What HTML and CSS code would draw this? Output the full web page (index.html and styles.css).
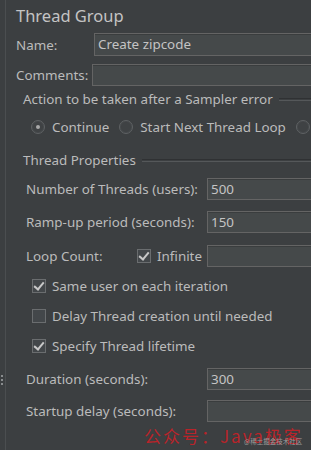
FILE: index.html
```html
<!DOCTYPE html>
<html>
<head>
<meta charset="utf-8">
<link rel="stylesheet" href="styles.css">
</head>
<body>
<div class="frame">
  <div class="splitter"><span></span><span></span><span></span></div>
  <div class="panel">
    <div class="title">Thread Group</div>
    <div class="row name-row"><span class="lbl lbl-name">Name:</span><div class="field">Create zipcode</div></div>
    <div class="row comments-row"><span class="lbl lbl-comments">Comments:</span><div class="field"></div></div>
    <div class="legend action-legend"><span>Action to be taken after a Sampler error</span><i></i></div>
    <div class="radios">
      <span class="radio on"></span><span class="rtext">Continue</span>
      <span class="radio"></span><span class="rtext">Start Next Thread Loop</span>
      <span class="radio"></span>
    </div>
    <div class="legend props-legend"><span>Thread Properties</span><i></i></div>
    <div class="prow threads"><span class="plbl">Number of Threads (users):</span><div class="field">500</div></div>
    <div class="prow ramp"><span class="plbl">Ramp-up period (seconds):</span><div class="field">150</div></div>
    <div class="prow loop"><span class="loopset"><span class="lbl-loop">Loop Count:</span><span class="check on"></span><span class="ctext">Infinite</span></span><div class="field"></div></div>
    <div class="crow first"><span class="check on"></span><span class="ctext">Same user on each iteration</span></div>
    <div class="crow"><span class="check"></span><span class="ctext">Delay Thread creation until needed</span></div>
    <div class="crow"><span class="check on"></span><span class="ctext">Specify Thread lifetime</span></div>
    <div class="prow duration"><span class="plbl">Duration (seconds):</span><div class="field">300</div></div>
    <div class="prow startup"><span class="plbl">Startup delay (seconds):</span><div class="field"></div></div>
  </div>
  <div class="watermark">公众号：Java极客<small>@稀土掘金技术社区</small></div>
</div>
</body>
</html>
```
FILE: styles.css
```css
html, body {
  margin: 0;
  padding: 0;
  background: #3c3f41;
  overflow: hidden;
}
.frame {
  position: relative;
  width: 311px;
  height: 450px;
  overflow: hidden;
  display: flex;
  font-family: "Noto Sans", "DejaVu Sans", sans-serif;
  font-size: 13.4px;
  color: #bbbbbb;
  background: #3c3f41;
}
.splitter {
  width: 6px;
  flex: none;
  border-right: 1px solid #4b4e50;
  display: flex;
  flex-direction: column;
  justify-content: center;
  align-items: flex-start;
  gap: 2px;
  padding-top: 310px;
  box-sizing: border-box;
}
.splitter span {
  width: 2px;
  height: 2px;
  margin-left: 1px;
  background: #8a8d8f;
}
.panel {
  flex: 1;
  padding-left: 10px;
  display: flex;
  flex-direction: column;
  min-width: 0;
}
.title {
  height: 31px;
  line-height: 31px;
  font-size: 16.5px;
  color: #c4c4c4;
}
.row {
  display: grid;
  align-items: center;
  white-space: nowrap;
}
.field {
  width: 320px;
  height: 22px;
  box-sizing: border-box;
  background: #45494a;
  border: 1px solid #646464;
  box-shadow: inset 0 1px 0 #3a3d3e;
  padding-left: 3px;
  line-height: 20px;
  color: #c4c4c4;
}
.name-row { margin-top: 2px; height: 23px; grid-template-columns: 78px 320px; }
.name-row .field { height: 23px; line-height: 21px; }
.comments-row { margin-top: 8px; height: 22px; grid-template-columns: 76px 320px; }
.legend {
  display: flex;
  align-items: center;
  white-space: nowrap;
  padding-left: 7px;
}
.legend i {
  flex: 1;
  height: 1px;
  margin-left: 6px;
  border-top: 1px solid #2f3133;
  border-bottom: 1px solid #55585a;
  min-width: 20px;
}
.action-legend { margin-top: 4px; height: 18px; }
.radios {
  margin-top: 8px;
  height: 22px;
  display: flex;
  align-items: center;
  white-space: nowrap;
  padding-left: 15px;
}
.radio {
  width: 12px;
  height: 12px;
  border-radius: 50%;
  border: 1px solid #5f6264;
  background: #3f4244;
  box-shadow: inset 0 0 0 1px #45484a;
  position: relative;
  flex: none;
}
.radio.on::after {
  content: "";
  position: absolute;
  left: 4px;
  top: 4px;
  width: 4px;
  height: 4px;
  border-radius: 50%;
  background: #a9a9a9;
}
.rtext { margin-left: 7px; margin-right: 10px; }
.props-legend { margin-top: 12px; height: 20px; }
.prow {
  display: grid;
  grid-template-columns: 181px 320px;
  align-items: center;
  white-space: nowrap;
  padding-left: 10px;
  height: 22px;
}
.threads { margin-top: 8px; }
.ramp { margin-top: 11px; }
.loop { margin-top: 12px; }
.loopset {
  display: flex;
  align-items: center;
}
.lbl-loop { width: 111px; flex: none; }
.check {
  width: 12px;
  height: 12px;
  border: 1px solid #6a6d6f;
  background: #43474a;
  position: relative;
  flex: none;
}
.check.on::after {
  content: "";
  position: absolute;
  left: 3px;
  top: 0px;
  width: 4px;
  height: 8px;
  border-right: 2px solid #c8c8c8;
  border-bottom: 2px solid #c8c8c8;
  transform: rotate(40deg);
}
.ctext { margin-left: 6px; }
.crow {
  display: flex;
  align-items: center;
  height: 20px;
  margin-top: 10px;
  padding-left: 16px;
  white-space: nowrap;
}
.crow.first { margin-top: 9px; }
.duration { margin-top: 12px; }
.startup { margin-top: 10px; }
.watermark {
  position: absolute;
  left: 144px;
  top: 423px;
  font-family: "Noto Sans CJK SC", sans-serif;
  font-size: 17px;
  color: #b8242a;
  white-space: nowrap;
  letter-spacing: 2px;
}
.watermark small {
  position: absolute;
  left: 100px;
  top: 13px;
  font-size: 6.5px;
  color: #9a9a9a;
  letter-spacing: 0;
}
```
